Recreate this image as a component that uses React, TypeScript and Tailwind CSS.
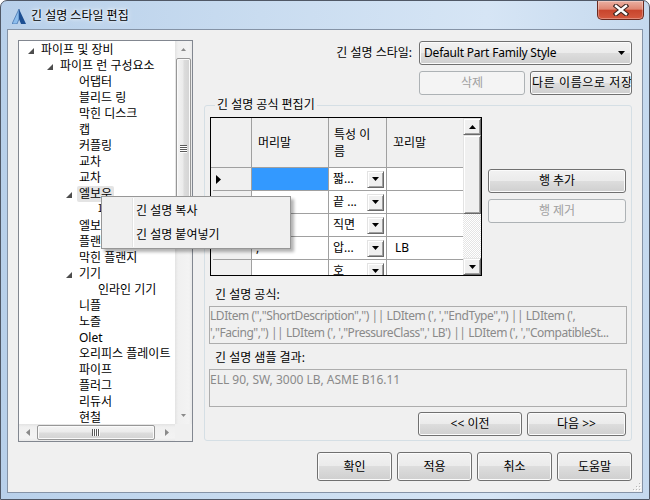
import React from "react";

const C3D =
  "bg-[#f0f0f0] border border-t-[#e3e3e3] border-l-[#e3e3e3] border-r-[#696969] border-b-[#696969] shadow-[inset_1px_1px_0_#ffffff,inset_-1px_-1px_0_#a0a0a0]";

function DownTri({ w = 7, h = 4, color = "#000" }: { w?: number; h?: number; color?: string }) {
  return (
    <svg width={w} height={h} viewBox={`0 0 ${w} ${h}`}>
      <polygon points={`0,0 ${w},0 ${w / 2},${h}`} fill={color} />
    </svg>
  );
}
function UpTri({ w = 7, h = 4, color = "#000" }: { w?: number; h?: number; color?: string }) {
  return (
    <svg width={w} height={h} viewBox={`0 0 ${w} ${h}`}>
      <polygon points={`0,${h} ${w},${h} ${w / 2},0`} fill={color} />
    </svg>
  );
}
function LeftTri({ color = "#8a8a8a" }: { color?: string }) {
  return (
    <svg width="4" height="7" viewBox="0 0 4 7">
      <polygon points="4,0 4,7 0,3.5" fill={color} />
    </svg>
  );
}
function RightTri({ color = "#8a8a8a" }: { color?: string }) {
  return (
    <svg width="4" height="7" viewBox="0 0 4 7">
      <polygon points="0,0 0,7 4,3.5" fill={color} />
    </svg>
  );
}

function Btn({
  children,
  className = "",
  disabled = false,
  left = false,
}: {
  children: React.ReactNode;
  className?: string;
  disabled?: boolean;
  left?: boolean;
}) {
  return (
    <div
      className={`flex items-center overflow-hidden whitespace-nowrap rounded-[3px] border ${
        left ? "justify-start pl-[1px]" : "justify-center"
      } ${
        disabled
          ? "border-[#adb2b5] bg-[#f4f4f4] text-[#a0a0a0]"
          : "border-[#707070] bg-[linear-gradient(#f2f2f2_0%,#ebebeb_49%,#dddddd_50%,#cfcfcf_100%)] shadow-[inset_0_0_0_1px_#fbfbfb]"
      } ${className}`}
    >
      {children}
    </div>
  );
}

const treeItems: { t: string; l: number; exp?: boolean; sel?: boolean }[] = [
  { t: "파이프 및 장비", l: 0, exp: true },
  { t: "파이프 런 구성요소", l: 1, exp: true },
  { t: "어댑터", l: 2 },
  { t: "블리드 링", l: 2 },
  { t: "막힌 디스크", l: 2 },
  { t: "캡", l: 2 },
  { t: "커플링", l: 2 },
  { t: "교차", l: 2 },
  { t: "교차", l: 2 },
  { t: "엘보우", l: 2, exp: true, sel: true },
  { t: "파이프 엘보우", l: 3 },
  { t: "엘보렛", l: 2 },
  { t: "플랜지", l: 2 },
  { t: "막힌 플랜지", l: 2 },
  { t: "기기", l: 2, exp: true },
  { t: "인라인 기기", l: 3 },
  { t: "니플", l: 2 },
  { t: "노즐", l: 2 },
  { t: "Olet", l: 2 },
  { t: "오리피스 플레이트", l: 2 },
  { t: "파이프", l: 2 },
  { t: "플러그", l: 2 },
  { t: "리듀서", l: 2 },
  { t: "현철", l: 2 },
];

const levelPad = ["pl-[3px]", "pl-[22px]", "pl-[41px]", "pl-[60px]"];

function Tree() {
  return (
    <div className="w-[175px] h-[402px] border border-[#828790] bg-white flex flex-col shrink-0">
      <div className="flex flex-1 min-h-0">
        <div className="flex-1 overflow-hidden pt-[1px]">
          {treeItems.map((it, i) => (
            <div key={i} className={`flex items-center h-[16px] whitespace-nowrap ${levelPad[it.l]}`}>
              <div className="w-[19px] h-[16px] flex items-center shrink-0 pl-[6px] pt-[1px]">
                {it.exp && (
                  <svg width="6" height="6" viewBox="0 0 6 6">
                    <polygon points="6,0 6,6 0,6" fill="#4d4d4d" />
                  </svg>
                )}
              </div>
              {it.sel ? (
                <span className="bg-[#e4e4e4] -ml-[2px] px-[2px] h-[16px] rounded-[2px]">{it.t}</span>
              ) : (
                <span>{it.t}</span>
              )}
            </div>
          ))}
        </div>
        {/* vertical scrollbar (Win7) */}
        <div className="w-[17px] flex flex-col bg-[linear-gradient(to_right,#e3e3e3,#f0f0f0_18%,#f3f3f3_82%,#e9e9e9)]">
          <div className="h-[17px] flex items-center justify-center">
            <UpTri w={5} h={3} color="#8a8a8a" />
          </div>
          <div className="h-[181px] mx-[1px] rounded-[2px] border border-[#979797] bg-[linear-gradient(to_right,#f4f4f4,#ebebeb_45%,#dcdcdc_55%,#d3d3d3)] shadow-[inset_0_0_0_1px_#fafafa] flex items-center justify-center">
            <svg width="7" height="8" viewBox="0 0 7 8">
              <rect x="0" y="0" width="7" height="1" fill="#5a5a5a" />
              <rect x="0" y="2" width="7" height="1" fill="#5a5a5a" />
              <rect x="0" y="4" width="7" height="1" fill="#5a5a5a" />
              <rect x="0" y="6" width="7" height="1" fill="#5a5a5a" />
              <rect x="0" y="1" width="7" height="1" fill="#ffffff" />
              <rect x="0" y="3" width="7" height="1" fill="#ffffff" />
              <rect x="0" y="5" width="7" height="1" fill="#ffffff" />
              <rect x="0" y="7" width="7" height="1" fill="#ffffff" />
            </svg>
          </div>
          <div className="flex-1" />
          <div className="h-[17px] flex items-center justify-center">
            <DownTri w={5} h={3} color="#8a8a8a" />
          </div>
        </div>
      </div>
      <div className="flex h-[17px]">
        <div className="flex-1 flex items-center bg-[linear-gradient(to_bottom,#e3e3e3,#f0f0f0_18%,#f3f3f3_82%,#e9e9e9)]">
          <div className="w-[17px] h-[17px] flex items-center justify-center">
            <LeftTri />
          </div>
          <div className="w-[118px] h-[15px] ml-[1px] rounded-[2px] border border-[#979797] bg-[linear-gradient(to_bottom,#f4f4f4,#ebebeb_45%,#dcdcdc_55%,#d3d3d3)] shadow-[inset_0_0_0_1px_#fafafa] flex items-center justify-center">
            <svg width="8" height="7" viewBox="0 0 8 7">
              <rect x="0" y="0" width="1" height="7" fill="#5a5a5a" />
              <rect x="2" y="0" width="1" height="7" fill="#5a5a5a" />
              <rect x="4" y="0" width="1" height="7" fill="#5a5a5a" />
              <rect x="6" y="0" width="1" height="7" fill="#5a5a5a" />
              <rect x="1" y="0" width="1" height="7" fill="#ffffff" />
              <rect x="3" y="0" width="1" height="7" fill="#ffffff" />
              <rect x="5" y="0" width="1" height="7" fill="#ffffff" />
              <rect x="7" y="0" width="1" height="7" fill="#ffffff" />
            </svg>
          </div>
          <div className="flex-1" />
          <div className="w-[17px] h-[17px] flex items-center justify-center">
            <RightTri />
          </div>
        </div>
        <div className="w-[17px] bg-[#f0f0f0]" />
      </div>
    </div>
  );
}

const gridRows = [
  { head: "", prop: "짧...", tail: "", sel: true, arrow: true },
  { head: ", ", prop: "끝 ...", tail: "" },
  { head: ", ", prop: "직면", tail: "" },
  { head: ", ", prop: "압...", tail: "LB" },
  { head: "", prop: "호", tail: "" },
];

function Grid() {
  return (
    <div className="ml-[1px] w-[272px] h-[159px] border border-black flex bg-white shrink-0">
      <div className="w-[252px] h-full overflow-hidden flex flex-col">
        <div className="flex h-[50px] shrink-0 bg-[#f0f0f0] border-b border-[#a0a0a0]">
          <div className="w-[41px] border-r border-[#a0a0a0]" />
          <div className="w-[77px] border-r border-[#a0a0a0] flex items-center pl-[6px]">머리말</div>
          <div className="w-[58px] border-r border-[#a0a0a0] flex flex-col justify-center pl-[5px] leading-[17px]">
            <span>특성 이</span>
            <span>름</span>
          </div>
          <div className="w-[76px] flex items-center pl-[6px]">꼬리말</div>
        </div>
        {gridRows.map((r, i) => (
          <div key={i} className="flex h-[23px] shrink-0">
            <div className="w-[41px] border-r border-[#a0a0a0] flex flex-col bg-[#f0f0f0]">
              <div className="flex-1 flex items-center pl-[5px]">
                {r.arrow && (
                  <svg width="6" height="9" viewBox="0 0 6 9">
                    <polygon points="0,0 5,4.5 0,9" fill="#000" />
                  </svg>
                )}
              </div>
              <div className="h-[1px] ml-[2px] bg-[#a0a0a0]" />
            </div>
            <div
              className={`w-[77px] border-r border-b border-[#a0a0a0] flex items-center pl-[4px] whitespace-pre ${
                r.sel ? "bg-[#3399ff]" : "bg-white"
              }`}
            >
              {r.head}
            </div>
            <div className="w-[58px] border-r border-b border-[#a0a0a0] bg-white flex items-center pl-[4px]">
              <span className="flex-1 overflow-hidden whitespace-nowrap">{r.prop}</span>
              <div className={`w-[17px] h-[17px] mr-[2px] flex items-center justify-center shrink-0 ${C3D}`}>
                <DownTri />
              </div>
            </div>
            <div className="w-[76px] border-b border-[#a0a0a0] bg-white flex items-center pl-[8px]">{r.tail}</div>
          </div>
        ))}
      </div>
      {/* classic scrollbar */}
      <div className="w-[18px] h-full flex flex-col">
        <div className={`h-[17px] flex items-center justify-center ${C3D}`}>
          <UpTri />
        </div>
        <div className={`h-[79px] ${C3D}`} />
        <div className="flex-1 bg-[image:repeating-conic-gradient(#ffffff_0%_25%,#e4e4e4_0%_50%)] bg-[length:2px_2px]" />
        <div className={`h-[17px] flex items-center justify-center ${C3D}`}>
          <DownTri />
        </div>
      </div>
    </div>
  );
}

function TextBox({ children, className = "" }: { children: React.ReactNode; className?: string }) {
  return (
    <div
      className={`h-[38px] w-[418px] border border-[#adadad] bg-[#f0f0f0] text-[#8a8a8a] leading-[17px] overflow-hidden whitespace-nowrap ${className}`}
    >
      {children}
    </div>
  );
}

export default function App() {
  return (
    <div className="font-['Noto_Sans','Noto_Sans_CJK_KR',sans-serif] w-[650px] h-[500px] overflow-hidden text-[12px] leading-[16px] text-black bg-white">
      <div className="flex flex-col w-full h-full rounded-t-[7px] border border-[#505866] bg-[linear-gradient(to_right,#b8d0ea,#c9dcf0_40%,#d6e5f5_75%,#c5d9ee)]">
        {/* Title bar */}
        <div className="flex items-center h-[28px] shrink-0">
          <div className="ml-[11px] w-[14px] h-[15px] mt-[2px]">
            <svg width="14" height="15" viewBox="0 0 14 15">
              <polygon points="7,0 0,15 5,15 7,10" fill="#8cbdec" />
              <polygon points="7,0 14,15 9,15 7,10" fill="#1c4f92" />
              <polygon points="7,0 7,10 5,15 0,15" fill="none" stroke="#2b5d9c" strokeWidth="0.6" />
            </svg>
          </div>
          <div className="ml-[5px] mt-[1px] [text-shadow:0_0_6px_#ffffff,0_0_3px_#ffffff]">긴 설명 스타일 편집</div>
          <div className="ml-auto mr-[5px] self-start w-[47px] h-[19px] rounded-b-[5px] border border-t-0 border-[#6a2a20] bg-[linear-gradient(#eab0a2_0%,#df8672_45%,#c8452d_52%,#d45a40_100%)] shadow-[inset_0_0_0_1px_rgba(255,255,255,0.3)] flex items-center justify-center">
            <svg width="16" height="12" viewBox="0 0 16 12">
              <path d="M3 2 L13 10 M13 2 L3 10" stroke="#3b2420" strokeWidth="4.6" strokeLinecap="square" />
              <path d="M3 2 L13 10 M13 2 L3 10" stroke="#ffffff" strokeWidth="2.4" strokeLinecap="square" />
            </svg>
          </div>
        </div>
        {/* Client */}
        <div className="relative mx-[6px] h-[464px] border border-[#8593a6] bg-[#f0f0f0] flex flex-col px-[10px] pt-[10px]">
          <div className="flex h-[402px]">
            <Tree />
            <div className="ml-[11px] w-[428px] flex flex-col">
              <div className="flex items-center justify-end mt-[1px] h-[24px]">
                <span className="mr-[7px]">긴 설명 스타일:</span>
                <div className="w-[213px] h-[24px] rounded-[3px] border border-[#707070] bg-[linear-gradient(#f2f2f2_0%,#ebebeb_49%,#dddddd_50%,#cfcfcf_100%)] shadow-[inset_0_0_0_1px_#fbfbfb] flex items-center pl-[4px] pr-[6px]">
                  <span className="flex-1 tracking-[-0.2px]">Default Part Family Style</span>
                  <DownTri />
                </div>
              </div>
              <div className="flex justify-end gap-[5px] mt-[6px]">
                <Btn disabled className="w-[106px] h-[24px]">
                  삭제
                </Btn>
                <Btn left className="w-[102px] h-[24px] tracking-[0.6px]">
                  다른 이름으로 저장
                </Btn>
              </div>
              <fieldset className="mt-[2px] m-0 p-0 min-w-0 w-[428px] border border-[#d5dfe5] rounded-[3px] pb-[4px] pl-[4px] pr-[4px]">
                <legend className="ml-[6px] px-[2px] leading-[16px]">긴 설명 공식 편집기</legend>
                <div className="flex mt-[4px]">
                  <Grid />
                  <div className="ml-[6px] pt-[52px] flex flex-col gap-[6px]">
                    <Btn className="w-[138px] h-[24px]">행 추가</Btn>
                    <Btn disabled className="w-[138px] h-[24px]">
                      행 제거
                    </Btn>
                  </div>
                </div>
                <div className="mt-[11px] pl-[6px]">긴 설명 공식:</div>
                <TextBox className="mt-[3px] tracking-[-0.45px]">
                  <div>LDItem ('',"ShortDescription",'') || LDItem (', ',"EndType",'') || LDItem (',</div>
                  <div>',"Facing",'') || LDItem (', ',"PressureClass",' LB') || LDItem (', ',"CompatibleSt...</div>
                </TextBox>
                <div className="mt-[6px] pl-[6px]">긴 설명 샘플 결과:</div>
                <TextBox className="mt-[3px] pt-[1px]">
                  <div>ELL 90, SW, 3000 LB, ASME B16.11</div>
                </TextBox>
                <div className="flex justify-end gap-[5px] mt-[5px] mr-[1px]">
                  <Btn className="w-[104px] h-[24px]">{"<< 이전"}</Btn>
                  <Btn className="w-[99px] h-[24px]">{"다음 >>"}</Btn>
                </div>
              </fieldset>
            </div>
          </div>
          <div className="flex justify-end gap-[5px] mt-[10px]">
            <Btn className="w-[75px] h-[29px]">확인</Btn>
            <Btn className="w-[75px] h-[29px]">적용</Btn>
            <Btn className="w-[75px] h-[29px]">취소</Btn>
            <Btn className="w-[75px] h-[29px]">도움말</Btn>
          </div>

          {/* context menu overlay */}
          <div className="absolute left-[93px] top-[166px] w-[190px] h-[53px] border border-[#979797] bg-[#f0f0f0] shadow-[3px_3px_3px_rgba(0,0,0,0.3)] flex">
            <div className="w-[30px]" />
            <div className="w-[1px] my-[1px] bg-[#e2e3e3]" />
            <div className="w-[1px] my-[1px] bg-white" />
            <div className="flex-1 flex flex-col pt-[2px] pl-[2px]">
              <div className="h-[24px] flex items-center">긴 설명 복사</div>
              <div className="h-[24px] flex items-center">긴 설명 붙여넣기</div>
            </div>
          </div>

          {/* size grip */}
          <div className="absolute right-[1px] bottom-[1px]">
            <svg width="10" height="10" viewBox="0 0 10 10">
              {[
                [8, 2],
                [8, 5],
                [5, 5],
                [8, 8],
                [5, 8],
                [2, 8],
              ].map(([x, y], i) => (
                <g key={i}>
                  <rect x={x} y={y} width="1" height="1" fill="#b8b8b8" />
                  <rect x={x + 1} y={y + 1} width="1" height="1" fill="#ffffff" />
                </g>
              ))}
            </svg>
          </div>
        </div>
      </div>
    </div>
  );
}
